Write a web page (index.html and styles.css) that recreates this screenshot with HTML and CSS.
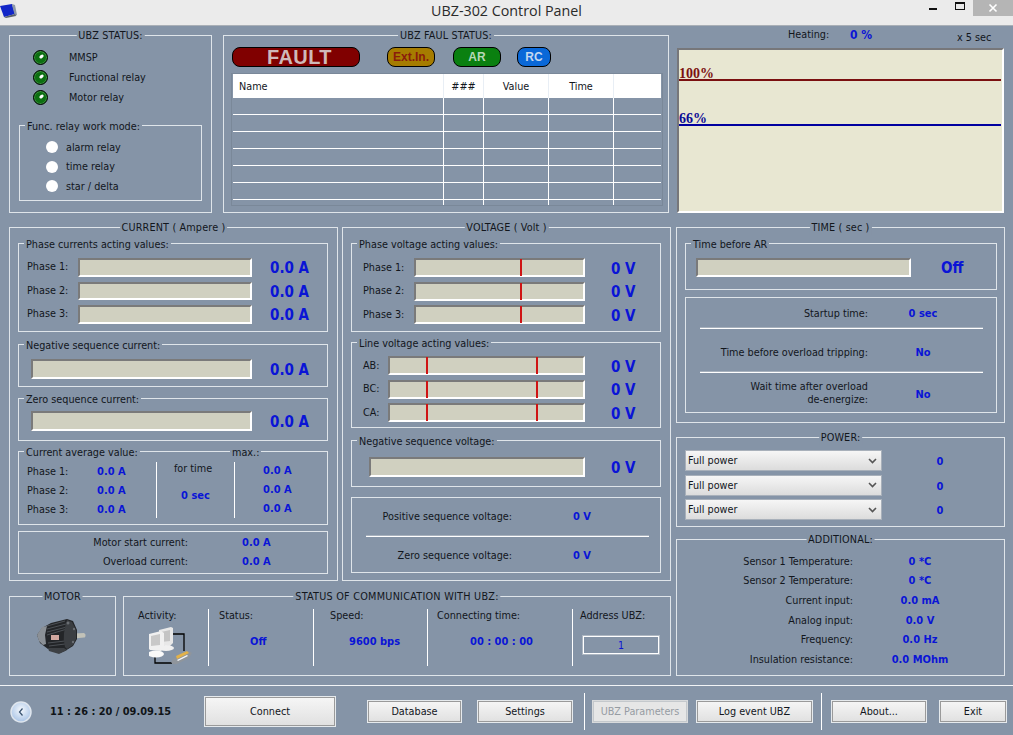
FILE: index.html
```html
<!DOCTYPE html>
<html lang="en">
<head>
<meta charset="utf-8">
<title>UBZ-302 Control Panel</title>
<link rel="stylesheet" href="styles.css">
</head>
<body>
<div class="app">
  <header class="titlebar">
    <div class="tb-left">
      <svg class="app-icon" width="17" height="14" viewBox="0 0 17 14"><path d="M0 2 12 0l3 10-11 3z" fill="#1226c8"/><path d="M12 0l3 1 2 10-2 1-3-11z" fill="#8d98a8"/><path d="M4 13l11-3 1 2-10 2z" fill="#59616c"/></svg>
    </div>
    <div class="tb-title">UBZ-302 Control Panel</div>
    <div class="tb-controls">
      <span class="tb-min"></span>
      <span class="tb-max"></span>
      <span class="tb-close"><svg width="10" height="10" viewBox="0 0 10 10"><path d="M1.5 1.5l7 7M8.5 1.5l-7 7" stroke="#fff" stroke-width="1.6"/></svg></span>
    </div>
  </header>

  <main class="main">
    <div class="col-left">
      <div class="row-top">
        <section class="group status-box">
          <h2 class="legend center">UBZ STATUS:</h2>
          <div class="led-row"><span class="led"></span><span>MMSP</span></div>
          <div class="led-row"><span class="led"></span><span>Functional relay</span></div>
          <div class="led-row"><span class="led"></span><span>Motor relay</span></div>
          <section class="group mode-box">
            <h3 class="legend left">Func. relay work mode:</h3>
            <div class="radio-row"><span class="radio"></span><span>alarm relay</span></div>
            <div class="radio-row"><span class="radio"></span><span>time relay</span></div>
            <div class="radio-row"><span class="radio"></span><span>star / delta</span></div>
          </section>
        </section>
        <section class="group fault-box">
          <h2 class="legend center">UBZ FAUL STATUS:</h2>
          <div class="pills">
            <span class="pill pill-fault">FAULT</span>
            <span class="pill pill-ext">Ext.In.</span>
            <span class="pill pill-ar">AR</span>
            <span class="pill pill-rc">RC</span>
          </div>
          <div class="table-frame">
            <table class="fault-table">
              <colgroup><col class="c1"><col class="c2"><col class="c3"><col class="c4"><col class="c5"></colgroup>
              <thead><tr><th class="th-name">Name</th><th>###</th><th>Value</th><th>Time</th><th></th></tr></thead>
              <tbody>
                <tr><td></td><td></td><td></td><td></td><td></td></tr>
                <tr><td></td><td></td><td></td><td></td><td></td></tr>
                <tr><td></td><td></td><td></td><td></td><td></td></tr>
                <tr><td></td><td></td><td></td><td></td><td></td></tr>
                <tr><td></td><td></td><td></td><td></td><td></td></tr>
                <tr><td></td><td></td><td></td><td></td><td></td></tr>
                <tr class="tr-last"><td></td><td></td><td></td><td></td><td></td></tr>
              </tbody>
            </table>
          </div>
        </section>
      </div>

      <div class="row-mid">
        <section class="group big-box">
          <h2 class="legend center">CURRENT ( Ampere )</h2>
          <section class="group sub h89 mt0">
            <h3 class="legend left">Phase currents acting values:</h3>
            <div class="bars bars-cur">
              <div class="mrow"><span class="lab lab51">Phase 1:</span><span class="bar w174 h18"></span><span class="val ml18">0.0 A</span></div>
              <div class="mrow"><span class="lab lab51">Phase 2:</span><span class="bar w174 h18"></span><span class="val ml18">0.0 A</span></div>
              <div class="mrow"><span class="lab lab51">Phase 3:</span><span class="bar w174 h18"></span><span class="val ml18">0.0 A</span></div>
            </div>
          </section>
          <section class="group sub h43 mt12">
            <h3 class="legend left">Negative sequence current:</h3>
            <div class="single pt14"><span class="bar w221 h20"></span><span class="val ml18">0.0 A</span></div>
          </section>
          <section class="group sub h43 mt11">
            <h3 class="legend left">Zero sequence current:</h3>
            <div class="single pt12"><span class="bar w221 h20"></span><span class="val ml18">0.0 A</span></div>
          </section>
          <section class="group sub h74 mt10">
            <h3 class="legend left">Current average value:</h3>
            <h3 class="legend legend-max">max.:</h3>
            <div class="avg">
              <div class="avg-a">
                <div class="avg-row"><span class="avg-lab">Phase 1:</span><b class="small">0.0 A</b></div>
                <div class="avg-row"><span class="avg-lab">Phase 2:</span><b class="small">0.0 A</b></div>
                <div class="avg-row"><span class="avg-lab">Phase 3:</span><b class="small">0.0 A</b></div>
              </div>
              <div class="avg-b">
                <span class="for-time">for time</span>
                <b class="small zero-sec">0 sec</b>
              </div>
              <div class="avg-c">
                <b class="small">0.0 A</b>
                <b class="small">0.0 A</b>
                <b class="small">0.0 A</b>
              </div>
            </div>
          </section>
          <section class="group sub h43 mt6 motor-cur">
            <div class="kv"><span class="kv-lab w169">Motor start current:</span><b class="small ml54">0.0 A</b></div>
            <div class="kv"><span class="kv-lab w169">Overload current:</span><b class="small ml54">0.0 A</b></div>
          </section>
        </section>

        <section class="group big-box">
          <h2 class="legend center">VOLTAGE ( Volt )</h2>
          <section class="group sub h89 mt0">
            <h3 class="legend left">Phase voltage acting values:</h3>
            <div class="bars bars-volt pl11">
              <div class="mrow"><span class="lab lab51">Phase 1:</span><span class="bar w171 h19"><i class="mark m-phase"></i></span><span class="val ml26">0 V</span></div>
              <div class="mrow"><span class="lab lab51">Phase 2:</span><span class="bar w171 h19"><i class="mark m-phase"></i></span><span class="val ml26">0 V</span></div>
              <div class="mrow"><span class="lab lab51">Phase 3:</span><span class="bar w171 h19"><i class="mark m-phase"></i></span><span class="val ml26">0 V</span></div>
            </div>
          </section>
          <section class="group sub h86 mt10">
            <h3 class="legend left">Line voltage acting values:</h3>
            <div class="bars bars-line pl11">
              <div class="mrow"><span class="lab lab25">AB:</span><span class="bar w197 h19"><i class="mark m-lo"></i><i class="mark m-hi"></i></span><span class="val ml26">0 V</span></div>
              <div class="mrow"><span class="lab lab25">BC:</span><span class="bar w197 h19"><i class="mark m-lo"></i><i class="mark m-hi"></i></span><span class="val ml26">0 V</span></div>
              <div class="mrow"><span class="lab lab25">CA:</span><span class="bar w197 h19"><i class="mark m-lo"></i><i class="mark m-hi"></i></span><span class="val ml26">0 V</span></div>
            </div>
          </section>
          <section class="group sub h47 mt12">
            <h3 class="legend left">Negative sequence voltage:</h3>
            <div class="single single-v"><span class="bar w216 h20"></span><span class="val ml26">0 V</span></div>
          </section>
          <section class="group sub h76 mt10">
            <div class="seq"><span class="kv-lab w160">Positive sequence voltage:</span><b class="small ml61">0 V</b></div>
            <div class="rule rule-v"></div>
            <div class="seq"><span class="kv-lab w160">Zero sequence voltage:</span><b class="small ml61">0 V</b></div>
          </section>
        </section>
      </div>

      <div class="row-bottom">
        <section class="group motor-box">
          <h2 class="legend center">MOTOR</h2>
          <svg class="motor-icon" width="50" height="35" viewBox="0 0 50 35">
            <path d="M37 14.500l10-.5q2 1 1.500 3t-1.500 1.500l-10 1z" fill="#c2c2b8"/>
            <path d="M5 9 14 4 30 0l6 2 4 9v9l-4 7-8 5-5 2-6-3-6-1-8-6-3-8z" fill="#232528"/>
            <path d="M0 16 5 8l5-1-2 9 1 9-3 1-4-4z" fill="#8b9096"/>
            <path d="M10 7l18-5M10 10l19-5M10 13l20-5M10 16l20-6M11 24l17-2M12 27l16-2" stroke="#4c5055" stroke-width="1"/>
            <path d="M30 1l5 2 4 8v9l-3 6-6 4-2-2q-2-7-1-14t3-13z" fill="#3b3e42"/>
            <circle cx="31" cy="4" r="1.500" fill="#6a6e73"/>
            <circle cx="37" cy="10" r="1.200" fill="#6a6e73"/>
            <circle cx="36" cy="23" r="1.200" fill="#6a6e73"/>
            <rect x="14" y="16" width="8" height="5" fill="#d1a79f"/>
            <path d="M11 29h16l3 2-8 4-10-3z" fill="#3d4044"/>
          </svg>
        </section>
        <section class="group comm-box">
          <h2 class="legend center">STATUS OF COMMUNICATION WITH UBZ:</h2>
          <div class="cell c-act">
            <div class="cell-lab">Activity:</div>
            <svg class="net-icon" width="44" height="41" viewBox="0 0 44 41">
              <path d="M21 7h14v17M6 27v9h17" fill="none" stroke="#000" stroke-width="1.300"/>
              <path d="M10 3l12-3 2 1v15l-3 3-11-1z" fill="#e8e8e8"/>
              <path d="M12 5l9-2v11l-9 1z" fill="#c4c4c4"/>
              <ellipse cx="17" cy="21" rx="8" ry="3" fill="#f0f0f0"/>
              <path d="M0 7l12-3 3 2v15l-3 3-11-1-1-1z" fill="#f0f0f0"/>
              <path d="M2 9l9-2v11l-9 1z" fill="#c8c8c8"/>
              <ellipse cx="7" cy="27" rx="8" ry="3.500" fill="#fafafa"/>
              <path d="M25 31l15-7 3 2-3 5-12 6q-5 1-6-2z" fill="#8f959c"/>
              <path d="M27 29l11-5 2 2-12 6z" fill="#e3b24a"/>
              <path d="M28 33l10-5 1 1-10 5z" fill="#f6f6f6"/>
            </svg>
          </div>
          <div class="cell c-status">
            <div class="cell-lab">Status:</div>
            <b class="cell-val">Off</b>
          </div>
          <div class="cell c-speed">
            <div class="cell-lab">Speed:</div>
            <b class="cell-val">9600 bps</b>
          </div>
          <div class="cell c-time">
            <div class="cell-lab">Connecting time:</div>
            <b class="cell-val">00 : 00 : 00</b>
          </div>
          <div class="cell c-addr">
            <div class="cell-lab">Address UBZ:</div>
            <input class="addr" type="text" value="1" readonly>
          </div>
        </section>
      </div>
    </div>

    <div class="col-right">
      <div class="heat-head">
        <span class="heat-lab">Heating:</span>
        <b class="heat-val">0 %</b>
        <span class="heat-scale">x 5 sec</span>
      </div>
      <div class="graph">
        <span class="g-text g-red">100%</span>
        <i class="g-line g-line-red"></i>
        <span class="g-text g-blue">66%</span>
        <i class="g-line g-line-blue"></i>
      </div>
      <section class="group time-box">
        <h2 class="legend center">TIME ( sec )</h2>
        <section class="group ar-box">
          <h3 class="legend left">Time before AR</h3>
          <div class="single single-ar"><span class="bar w215 h19"></span><span class="val ml30">Off</span></div>
        </section>
        <section class="group times">
          <div class="t-row t1"><span class="kv-lab w182">Startup time:</span><b class="small t-val">0 sec</b></div>
          <div class="rule rule-t"></div>
          <div class="t-row t2"><span class="kv-lab w182">Time before overload tripping:</span><b class="small t-val">No</b></div>
          <div class="rule rule-t"></div>
          <div class="t-row t3"><span class="kv-lab w182">Wait time after overload<br>de-energize:</span><b class="small t-val">No</b></div>
        </section>
      </section>
      <section class="group power-box">
        <h2 class="legend center">POWER:</h2>
        <div class="p-row"><div class="select"><span>Full power</span><svg width="9" height="6" viewBox="0 0 9 6"><path d="M1 1l3.500 3.500L8 1" fill="none" stroke="#555" stroke-width="1.600"/></svg></div><b class="small p-val">0</b></div>
        <div class="p-row"><div class="select"><span>Full power</span><svg width="9" height="6" viewBox="0 0 9 6"><path d="M1 1l3.500 3.500L8 1" fill="none" stroke="#555" stroke-width="1.600"/></svg></div><b class="small p-val">0</b></div>
        <div class="p-row"><div class="select"><span>Full power</span><svg width="9" height="6" viewBox="0 0 9 6"><path d="M1 1l3.500 3.500L8 1" fill="none" stroke="#555" stroke-width="1.600"/></svg></div><b class="small p-val">0</b></div>
      </section>
      <section class="group add-box">
        <h2 class="legend center">ADDITIONAL:</h2>
        <div class="a-row"><span class="kv-lab w176">Sensor 1 Temperature:</span><b class="small a-val">0 *C</b></div>
        <div class="a-row"><span class="kv-lab w176">Sensor 2 Temperature:</span><b class="small a-val">0 *C</b></div>
        <div class="a-row"><span class="kv-lab w176">Current input:</span><b class="small a-val">0.0 mA</b></div>
        <div class="a-row"><span class="kv-lab w176">Analog input:</span><b class="small a-val">0.0 V</b></div>
        <div class="a-row"><span class="kv-lab w176">Frequency:</span><b class="small a-val">0.0 Hz</b></div>
        <div class="a-row"><span class="kv-lab w176">Insulation resistance:</span><b class="small a-val">0.0 MOhm</b></div>
      </section>
    </div>
  </main>

  <footer class="footer">
    <svg class="clock" width="22" height="22" viewBox="0 0 22 22">
      <defs><radialGradient id="cg" cx=".5" cy=".4" r=".6"><stop offset="0" stop-color="#f4f8fd"/><stop offset="1" stop-color="#a9c4e6"/></radialGradient></defs>
      <circle cx="11" cy="11" r="10" fill="url(#cg)" stroke="#dfe6ee" stroke-width="1.500"/>
      <path d="M12.500 7.500 9.500 11l3 3.500" fill="none" stroke="#36506e" stroke-width="1.200"/>
    </svg>
    <b class="clock-time">11 : 26 : 20 / 09.09.15</b>
    <button class="btn b-connect">Connect</button>
    <button class="btn b-db">Database</button>
    <button class="btn b-set">Settings</button>
    <span class="f-sep s1"></span>
    <button class="btn b-par" disabled>UBZ Parameters</button>
    <button class="btn b-log">Log event UBZ</button>
    <span class="f-sep s2"></span>
    <button class="btn b-about">About...</button>
    <button class="btn b-exit">Exit</button>
  </footer>
</div>
</body>
</html>
```
FILE: styles.css
```css
* { box-sizing: border-box; }
html, body { margin: 0; padding: 0; }
body {
  font-family: "DejaVu Sans", "Noto Sans", sans-serif;
  font-stretch: condensed;
  font-size: 10.75px;
  color: #12161c;
}
.app {
  width: 1013px;
  height: 735px;
  overflow: hidden;
  display: flex;
  flex-direction: column;
  background: #8594a7;
}

/* title bar */
.titlebar {
  height: 26px;
  flex: none;
  display: grid;
  grid-template-columns: 1fr auto 1fr;
  background: #ebebeb;
  border-bottom: 1px solid #a9afb6;
}
.tb-left { display: flex; align-items: flex-start; padding-top: 4px; }
.tb-title {
  font-family: "Open Sans", sans-serif;
  font-stretch: normal;
  font-size: 14.3px;
  line-height: 22px;
  color: #2a2a2a;
}
.tb-controls { display: flex; justify-content: flex-end; align-items: flex-start; }
.tb-min { width: 8px; height: 2px; background: #111; margin-top: 8px; margin-right: 18px; }
.tb-max { width: 10px; height: 8px; border: 1px solid #111; border-top-width: 2px; margin-top: 2px; margin-right: 8px; }
.tb-close {
  width: 40px; height: 16px;
  background: #b5b5b5;
  display: flex; align-items: center; justify-content: center;
}

/* grouping */
.main { flex: 1; display: flex; padding-left: 9px; gap: 5px; min-height: 0; }
.col-left { width: 662px; padding-top: 9px; }
.col-right { width: 329px; }
.group { position: relative; border: 1px solid #dfe5ea; }
.legend {
  position: absolute;
  top: -7px;
  margin: 0;
  padding: 0 2px;
  font-size: inherit;
  font-weight: normal;
  line-height: 15px;
  white-space: nowrap;
  background: #8594a7;
}
.legend.center { left: 50%; transform: translateX(-50%); letter-spacing: .15px; top: -8px; }
.comm-box > .legend.center { letter-spacing: .25px; }
.legend.left { left: 5px; }
.legend-max { left: 211px; }

.row-top { display: flex; gap: 11px; height: 178px; }
.row-mid { display: flex; gap: 4px; height: 354px; margin-top: 14px; }
.row-bottom { display: flex; gap: 7px; height: 80px; margin-top: 15px; }

/* status */
.status-box { width: 203px; padding: 11px 0 0 23px; }
.led-row { display: flex; align-items: center; gap: 21px; height: 20px; }
.led {
  position: relative;
  width: 15px; height: 15px;
  border-radius: 50%;
  background: #0d6f12;
  border: 1px solid #000;
  box-shadow: inset 0 0 0 1px #3b8f3f;
  flex: none;
}
.led::after {
  content: "";
  position: absolute;
  left: 5px; top: 4px;
  width: 5px; height: 3px;
  border-radius: 50%;
  background: #fff;
  transform: rotate(-40deg);
}
.mode-box {
  width: 183px; height: 76px;
  margin: 18px 0 0 -14px;
  padding: 11.5px 0 0 26px;
}
.radio-row { display: flex; align-items: center; gap: 8px; height: 19.5px; }
.radio { width: 12px; height: 12px; border-radius: 50%; background: #fff; flex: none; }

/* fault */
.fault-box { width: 446px; padding: 11px 0 0 7px; }
.pills { display: flex; margin-left: 1px; height: 20px; }
.pill {
  height: 20px;
  border: 1px solid #000;
  border-radius: 8px;
  display: flex; align-items: center; justify-content: center;
  font-weight: bold;
  font-size: 12px;
  font-family: "Liberation Sans", sans-serif;
  font-stretch: normal;
}
.pill-fault { width: 128px; padding-left: 7px; background: #800000; color: #cfb9b9; font-size: 20px; letter-spacing: .4px; }
.pill-ext { width: 48px; margin-left: 27px; background: #a67c00; color: #8a1c0c; }
.pill-ar { width: 48px; margin-left: 18px; background: #0a8010; color: #b6d8b6; }
.pill-rc { width: 34px; margin-left: 16px; background: #0a68d8; color: #c4d8f0; }
.table-frame { width: 432px; height: 133px; margin-top: 6px; padding: 0 1px; border: 1px solid #7a8899; overflow: hidden; }
.fault-table { width: 428px; border-collapse: separate; border-spacing: 0; table-layout: fixed; }
.c1 { width: 211px; } .c2 { width: 40px; } .c3, .c4 { width: 65px; } .c5 { width: 47px; }
.fault-table th {
  height: 24px; padding: 0;
  background: #fff;
  font-weight: normal;
  border-right: 1px solid #e8eef5;
}
.fault-table th.th-name { text-align: left; padding-left: 6px; }
.fault-table th:last-child { border-right: 0; }
.fault-table td { height: 17px; padding: 0; border-right: 1px solid #fff; border-bottom: 1px solid #fff; }
.fault-table td:last-child { border-right: 0; }
.fault-table .tr-last td { height: 6px; border-bottom: 0; }

/* current and voltage */
.big-box { width: 329px; padding: 15px 0 0 8px; }
.sub { width: 310px; }
.h89 { height: 89px; } .h86 { height: 86px; } .h76 { height: 76px; } .h74 { height: 74px; }
.h47 { height: 47px; } .h43 { height: 43px; }
.mt0 { margin-top: 0; } .mt6 { margin-top: 6px; } .mt10 { margin-top: 10px; }
.mt11 { margin-top: 11px; } .mt12 { margin-top: 12px; }
.bars { display: flex; flex-direction: column; padding-top: 14px; padding-left: 8px; }
.bars-cur { gap: 5px; }
.bars-volt, .bars-line { gap: 4.5px; }
.bars-line { padding-top: 13px; }
.pl11 { padding-left: 11px; }
.mrow { display: flex; align-items: center; height: 18.5px; }
.bars-volt .mrow, .bars-line .mrow { height: 19px; }
.lab { flex: none; margin-bottom: 1px; }
.lab51 { width: 51px; } .lab25 { width: 25px; }
.bar {
  position: relative;
  display: block;
  flex: none;
  background: #d0d0c0;
  border: 2px solid;
  border-color: #7a7a7a #fff #fff #7a7a7a;
}
.w171 { width: 171px; } .w174 { width: 174px; } .w197 { width: 197px; }
.w215 { width: 215px; } .w216 { width: 216px; } .w221 { width: 221px; }
.h18 { height: 18.5px; } .h19 { height: 19px; } .h20 { height: 20px; }
.mark { position: absolute; top: -1px; bottom: -1px; width: 2px; background: #cf1414; }
.m-phase { left: 104px; } .m-lo { left: 36px; } .m-hi { left: 146px; }
.val {
  font-weight: bold;
  font-size: 15px;
  line-height: 18px;
  color: #0a14d6;
  margin-top: 2px;
  white-space: nowrap;
}
.ml18 { margin-left: 18px; } .ml26 { margin-left: 26px; } .ml30 { margin-left: 30px; }
.single { display: flex; align-items: center; padding-left: 12px; }
.pt12 { padding-top: 12px; } .pt14 { padding-top: 14px; }
.single-v { padding: 16px 0 0 17px; }
.single-ar { padding: 14px 0 0 10px; }
.single-ar .val { margin-top: 0; }
.small { font-size: 11px; font-weight: bold; color: #0a14d6; white-space: nowrap; }

.avg { display: flex; padding: 10px 0 0 8px; height: 67px; }
.avg-a { width: 130px; height: 56px; border-right: 1px solid #fff; }
.avg-row { display: flex; height: 19px; align-items: center; }
.avg-lab { width: 70px; }
.avg-b { width: 78px; height: 56px; border-right: 1px solid #fff; display: flex; flex-direction: column; align-items: center; }
.for-time { line-height: 14px; margin-left: -5px; }
.zero-sec { margin-top: 13px; line-height: 14px; }
.avg-c { padding: 0 0 0 28px; display: flex; flex-direction: column; }
.avg-c .small { height: 19px; line-height: 18px; }

.motor-cur { padding-top: 1px; }
.kv { display: flex; align-items: center; height: 19px; }
.kv-lab { text-align: right; flex: none; }
.w160 { width: 160px; } .w169 { width: 169px; } .w176 { width: 176px; } .w182 { width: 182px; }
.ml54 { margin-left: 54px; } .ml61 { margin-left: 61px; }
.seq { display: flex; align-items: center; height: 37.5px; }
.rule { height: 1px; background: #fff; box-shadow: 0 -1px 0 #a7b1bd; }
.rule-v { width: 283px; margin-left: 14px; }
.rule-t { width: 283px; margin-left: 14px; }

/* bottom row */
.motor-box { width: 107px; padding: 22px 0 0 27px; }
.motor-icon { display: block; }
.comm-box { width: 548px; display: flex; padding-top: 12px; }
.cell { height: 57px; border-right: 1px solid #fff; flex: none; }
.cell-lab { line-height: 13px; }
.cell-val { display: block; font-size: 11px; color: #0a14d6; line-height: 15px; margin-top: 12px; white-space: nowrap; }
.c-act { width: 85px; padding-left: 14px; }
.net-icon { display: block; margin: 5px 0 0 11px; }
.c-status { width: 105px; padding-left: 10px; }
.c-status .cell-val { margin-left: 31px; }
.c-speed { width: 114px; padding-left: 16px; }
.c-speed .cell-val { margin-left: 19px; }
.c-time { width: 145px; padding-left: 9px; }
.c-time .cell-val { margin-left: 33px; }
.c-addr { width: 97px; padding-left: 7px; border-right: 0; }
.addr {
  display: block;
  width: 76px; height: 18px;
  margin: 14px 0 0 3px;
  padding: 0;
  border: 1px solid #fff;
  outline: 1px solid #aeb7c2;
  outline-offset: 0;
  background: #8594a7;
  color: #0a14d6;
  font: inherit;
  font-size: 10.5px;
  text-align: center;
}

/* right column */
.heat-head { display: flex; height: 22px; padding: 2px 0 0 112px; }
.heat-lab { width: 62px; line-height: 14px; }
.heat-val { width: 107px; font-size: 12px; line-height: 14px; color: #0a14d6; }
.heat-scale { line-height: 14px; margin-top: 3px; }
.graph {
  position: relative;
  width: 327px; height: 165px;
  margin-left: 1px;
  background: #e8e7d2;
  border: 2px solid;
  border-color: #77777a #fff #fff #77777a;
}
.g-text { position: absolute; left: 0; font: bold 14px/14px "Liberation Serif", serif; font-stretch: normal; }
.g-red { top: 17px; color: #7b1010; }
.g-blue { top: 62px; color: #0c0c96; }
.g-line { position: absolute; left: 0; right: 1px; height: 2px; }
.g-line-red { top: 29px; background: #7b1010; }
.g-line-blue { top: 74px; background: #0000a0; }

.time-box { height: 196px; margin-top: 14px; padding: 15px 0 0 8px; }
.ar-box { width: 312px; height: 47px; }
.times { width: 312px; height: 116px; margin-top: 7px; }
.t-row { display: flex; align-items: center; }
.t1 { height: 30px; }
.t2 { height: 43px; padding-top: 3px; }
.t3 { height: 39px; line-height: 13px; }
.t3 .t-val { margin-top: 4px; }
.t-val { width: 88px; margin-left: 11px; text-align: center; }

.power-box { height: 90px; margin-top: 14px; padding: 12px 0 0 8px; }
.p-row { display: flex; align-items: center; margin-bottom: 3.5px; }
.select {
  width: 197px; height: 21px;
  display: flex; align-items: center; justify-content: space-between;
  padding: 0 4px 0 2px;
  background: linear-gradient(#f6f6f6, #dcdcdc);
  border: 1px solid #a8b0ba;
}
.p-val { width: 20px; margin: 2px 0 0 48px; text-align: center; }

.add-box { height: 137px; margin-top: 12px; padding-top: 11.5px; }
.a-row { display: flex; align-items: center; height: 19.6px; }
.a-val { width: 80px; margin-left: 27px; text-align: center; }

/* footer */
.footer {
  height: 50px;
  flex: none;
  display: flex;
  align-items: center;
  padding: 2px 0 0 10px;
  border-top: 1px solid #f2f4f6;
}
.clock { flex: none; }
.clock-time { width: 154px; margin-left: 18px; font-size: 10.9px; color: #101418; white-space: nowrap; }
.btn {
  flex: none;
  padding: 0;
  font: inherit;
  color: #12161c;
  background: linear-gradient(#f6f6f6, #e0e0e0);
  border: 1px solid #e6eaed;
  box-shadow: inset 0 0 0 1px #9a9a9a;
}
.b-connect { width: 132px; height: 31px; }
.b-db { width: 95px; height: 23px; margin-left: 31px; }
.b-set { width: 96px; height: 23px; margin-left: 15px; }
.f-sep { width: 1px; height: 37px; background: #fff; flex: none; }
.s1 { margin-left: 11px; }
.b-par { width: 96px; height: 23px; margin-left: 7px; color: #969ca3; background: #e6e6e6; border-color: #d8dadc; box-shadow: inset 0 0 0 1px #c4c8cc; }
.b-log { width: 117px; height: 23px; margin-left: 8px; }
.s2 { margin-left: 8px; }
.b-about { width: 96px; height: 23px; margin-left: 9px; }
.b-exit { width: 68px; height: 23px; margin-left: 12px; }
```
